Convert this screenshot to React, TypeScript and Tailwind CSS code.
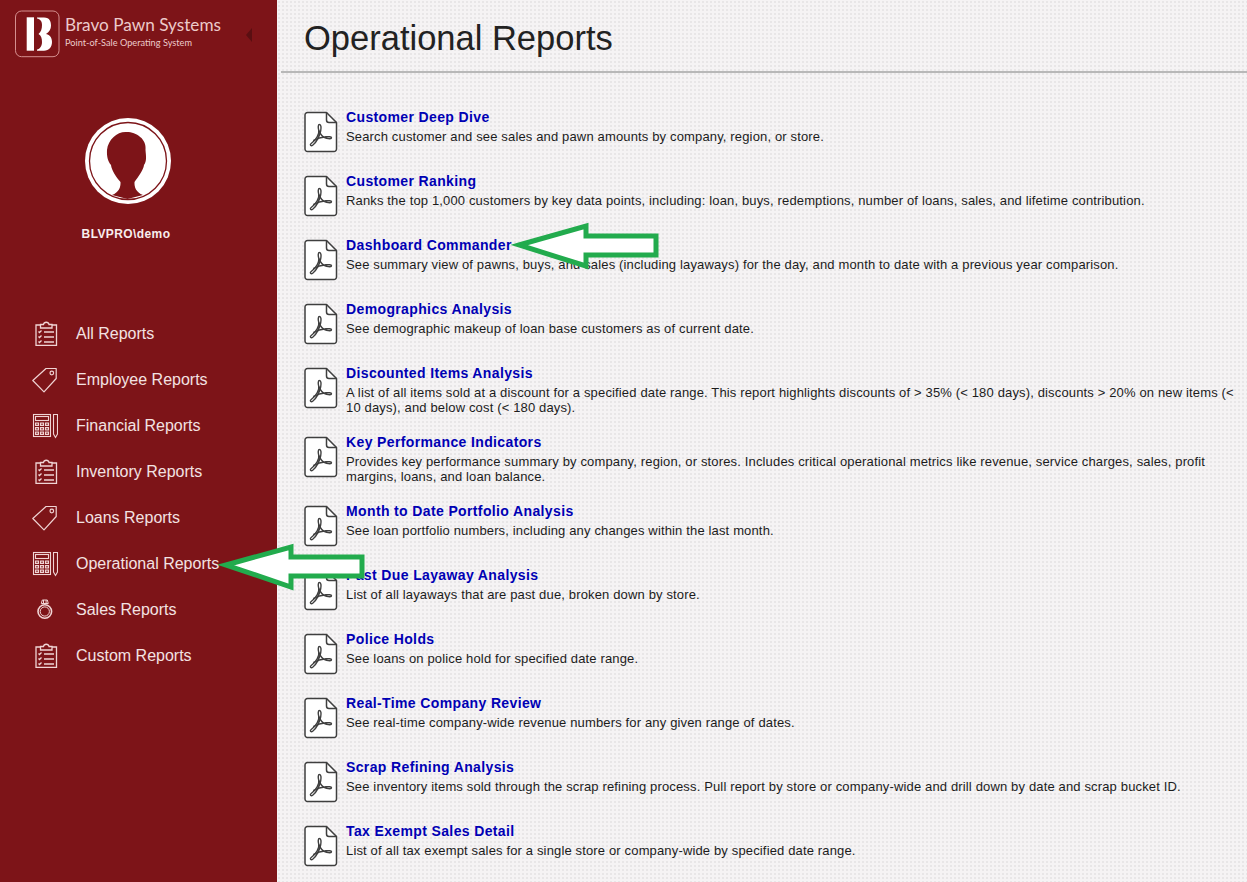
import React from 'react';

interface Report {
  title: string;
  desc: string;
}

const reports: Report[] = [
  { title: 'Customer Deep Dive', desc: 'Search customer and see sales and pawn amounts by company, region, or store.' },
  { title: 'Customer Ranking', desc: 'Ranks the top 1,000 customers by key data points, including: loan, buys, redemptions, number of loans, sales, and lifetime contribution.' },
  { title: 'Dashboard Commander', desc: 'See summary view of pawns, buys, and sales (including layaways) for the day, and month to date with a previous year comparison.' },
  { title: 'Demographics Analysis', desc: 'See demographic makeup of loan base customers as of current date.' },
  { title: 'Discounted Items Analysis', desc: 'A list of all items sold at a discount for a specified date range. This report highlights discounts of > 35% (< 180 days), discounts > 20% on new items (< 10 days), and below cost (< 180 days).' },
  { title: 'Key Performance Indicators', desc: 'Provides key performance summary by company, region, or stores. Includes critical operational metrics like revenue, service charges, sales, profit margins, loans, and loan balance.' },
  { title: 'Month to Date Portfolio Analysis', desc: 'See loan portfolio numbers, including any changes within the last month.' },
  { title: 'Past Due Layaway Analysis', desc: 'List of all layaways that are past due, broken down by store.' },
  { title: 'Police Holds', desc: 'See loans on police hold for specified date range.' },
  { title: 'Real-Time Company Review', desc: 'See real-time company-wide revenue numbers for any given range of dates.' },
  { title: 'Scrap Refining Analysis', desc: 'See inventory items sold through the scrap refining process. Pull report by store or company-wide and drill down by date and scrap bucket ID.' },
  { title: 'Tax Exempt Sales Detail', desc: 'List of all tax exempt sales for a single store or company-wide by specified date range.' },
];

const ClipboardIcon = () => (
  <svg width="26" height="26" viewBox="0 0 26 26" fill="none" stroke="#f0d4d4" strokeWidth="1.3">
    <path d="M8.5 4H4v20.300h20.500V4H20" />
    <path d="M8.500 7V3.500h3a2.800 2.800 0 0 1 5.500 0h3V7z" />
    <path d="M6.500 10.500l1 1 2-2M6.500 15.500l1 1 2-2M6.500 20.500l1 1 2-2" />
    <path d="M12 11h10M12 16h10M12 21h10" strokeWidth="1.5" />
  </svg>
);

const TagIcon = () => (
  <svg width="26" height="26" viewBox="0 0 26 26" fill="none" stroke="#f0d4d4" strokeWidth="1.2" strokeLinejoin="round">
    <path d="M0.800 13.500L14 1.500h10.200v10L12 24.800z" />
    <circle cx="19.800" cy="6" r="1.800" />
  </svg>
);

const CalculatorIcon = () => (
  <svg width="26" height="26" viewBox="0 0 26 26" fill="none" stroke="#f0d4d4" strokeWidth="1.1">
    <rect x="1.500" y="1.500" width="17" height="22" />
    <rect x="3.500" y="3.500" width="13" height="4" />
    <path
      d="M3.500 10h3v2.500h-3zM8.500 10h3v2.500h-3zM13.500 10h3v2.500h-3zM3.500 14.500h3V17h-3zM8.500 14.500h3V17h-3zM13.500 14.500h3V17h-3zM3.500 19h3v2.500h-3zM8.500 19h3v2.500h-3zM13.500 19h3v2.500h-3z"
      fill="#f0d4d4"
      fillOpacity="0.35"
    />
    <path d="M21.500 1.500h4v19.500l-2 3.500-2-3.500z" />
  </svg>
);

const RingIcon = () => (
  <svg width="26" height="26" viewBox="0 0 26 26" fill="none" stroke="#f0d4d4">
    <circle cx="12.800" cy="14.500" r="6.800" strokeWidth="1.600" />
    <circle cx="12.800" cy="14.500" r="4.600" strokeWidth="1" />
    <path d="M9.300 6.500l1-3.500h5l1 3.500zM11.500 3v3.500M14.100 3v3.500" strokeWidth="1" />
  </svg>
);

const PdfIcon = () => (
  <svg width="34" height="42" viewBox="0 0 34 42" className="shrink-0">
    <path
      d="M3.500 1.500h19l10 10v26.500a2.500 2.500 0 0 1-2.500 2.500H3.500A2.500 2.500 0 0 1 1 38V4a2.500 2.500 0 0 1 2.500-2.500z"
      fill="#ffffff"
      stroke="#3f3f3f"
      strokeWidth="1.500"
      strokeLinejoin="round"
    />
    <path d="M22.500 1.500v7.500a2.500 2.500 0 0 0 2.500 2.500h7.500" fill="none" stroke="#3f3f3f" strokeWidth="1.500" />
    <path
      d="M15.500 13.500c-1.500 0-1.500 3-.8 5.500.9 3.500-2.500 10-7.500 13.500-1.800 1.300-.2 3 1.500 1.800 3.800-2.700 7-9.500 8-14.500.6-3.200.4-6.300-1.200-6.300z"
      fill="none"
      stroke="#3f3f3f"
      strokeWidth="1.400"
    />
    <path
      d="M15 19.500c1.200 3.500 4 7 7.500 7.800 2.500.6 5 .8 5-.5s-3-1.300-5.500-1.100c-5 .4-9.500 2-12.800 4"
      fill="none"
      stroke="#3f3f3f"
      strokeWidth="1.400"
    />
  </svg>
);

const Avatar = () => (
  <svg width="88" height="88" viewBox="0 0 88 88">
    <circle cx="44" cy="44" r="43" fill="#ffffff" />
    <circle cx="44" cy="44" r="38.500" fill="none" stroke="#7d1418" strokeWidth="1.300" />
    <path
      d="M43 15C34 14 24 22 23 33c-.3 6 .5 11 4 15 .5 5 5 12 9.500 17 .3 5-1.500 10.500-8.500 13l15.500 4 15.500-4c-7-2.500-8.800-8-8.500-13 3.500-5 9-12 9.500-17 3-4 2-9 1.500-15C63 22 52 15 43 15z"
      fill="#7d1418"
    />
  </svg>
);

const Logo = () => (
  <svg width="46" height="48" viewBox="0 0 46 48">
    <rect x="1.500" y="1" width="43.500" height="45.700" rx="6" fill="none" stroke="#d58f8f" strokeWidth="1" />
    <rect x="12.700" y="7.300" width="7.300" height="33.400" fill="#ffffff" />
    <path
      d="M23 7.500h7c6 0 7 4.500 7 8 0 3.500-1.500 6.500-5 8.500 5 1 6 5 6 8 0 5-3 8.700-8 8.700h-7v-1.200c3-.5 5-3.500 5-7.500 0-4-1-6.500-3.500-8 2.500-2 3.500-5 3.500-9s-2-6-5-6.500z"
      fill="#ffffff"
    />
  </svg>
);

const navItems = [
  { label: 'All Reports', icon: <ClipboardIcon /> },
  { label: 'Employee Reports', icon: <TagIcon /> },
  { label: 'Financial Reports', icon: <CalculatorIcon /> },
  { label: 'Inventory Reports', icon: <ClipboardIcon /> },
  { label: 'Loans Reports', icon: <TagIcon /> },
  { label: 'Operational Reports', icon: <CalculatorIcon /> },
  { label: 'Sales Reports', icon: <RingIcon /> },
  { label: 'Custom Reports', icon: <ClipboardIcon /> },
];

export default function App() {
  return (
    <div className="relative flex h-[882px] overflow-hidden bg-[#f5f3f4] font-['Liberation_Sans',Arial,sans-serif]">
      <aside className="flex w-[277px] shrink-0 flex-col bg-[#7d1418]">
        <div className="flex h-[66px] items-start pl-[14px] pt-[10px]">
          <Logo />
          <div className="ml-[5px] pt-[4px] font-['Lato',sans-serif] text-[#eccaca]">
            <div className="text-[17.2px] leading-[22px]">Bravo Pawn Systems</div>
            <div className="mt-[1px] text-[9.2px] leading-[12px]">Point-of-Sale Operating System</div>
          </div>
          <div className="ml-auto mr-[25px] mt-[18px] h-0 w-0 border-y-[7px] border-r-[6px] border-y-transparent border-r-[#5a0f12]" />
        </div>
        <div className="mt-[51px] flex justify-center pr-[21px]">
          <Avatar />
        </div>
        <div className="mt-[21px] pr-[25px] text-center text-[12px] font-bold leading-[16px] tracking-[0.4px] text-[#f8eeee]">BLVPRO\demo</div>
        <nav className="mt-[69px] flex flex-col">
          {navItems.map(item => (
            <div key={item.label} className="flex h-[46px] items-center pl-[32px]">
              <span className="flex w-[44px] shrink-0">{item.icon}</span>
              <span className="text-[16px] text-[#f3e2e2]">{item.label}</span>
            </div>
          ))}
        </nav>
      </aside>

      <main className="min-w-0 flex-1 bg-[radial-gradient(#e8e6e7_1px,transparent_1px)] bg-[size:4px_4px]">
        <div className="ml-[4px] h-[73px] border-b-2 border-[#b8b8b8] pl-[23px] pt-[15px]">
          <h1 className="text-[34.5px] leading-[46px] text-[#222222]">Operational Reports</h1>
        </div>
        <div className="pl-[27px] pr-[8px] pt-[36px]">
          {reports.map(report => (
            <div key={report.title} className="mb-[18px] flex min-h-[46px] items-start">
              <div className="mt-[2px]">
                <PdfIcon />
              </div>
              <div className="ml-[8px]">
                <div className="text-[14px] font-bold leading-[16px] tracking-[0.37px] text-[#0000b4]">{report.title}</div>
                <div className="mt-[4px] pb-[1px] text-[13px] leading-[15px] tracking-[0.15px] text-[#1c1c1c]">{report.desc}</div>
              </div>
            </div>
          ))}
        </div>
      </main>

      <svg className="absolute left-[511px] top-[220px]" width="152" height="52" viewBox="0 0 152 52">
        <path d="M8 25L75 6v10h70v19H75v11z" fill="#ffffff" stroke="#22ab4d" strokeWidth="5" strokeLinejoin="miter" />
      </svg>
      <svg className="absolute left-[218px] top-[541px]" width="152" height="52" viewBox="0 0 152 52">
        <path d="M8 24L73 6v10h71v19H73v11z" fill="#ffffff" stroke="#22ab4d" strokeWidth="5" strokeLinejoin="miter" />
      </svg>
    </div>
  );
}
